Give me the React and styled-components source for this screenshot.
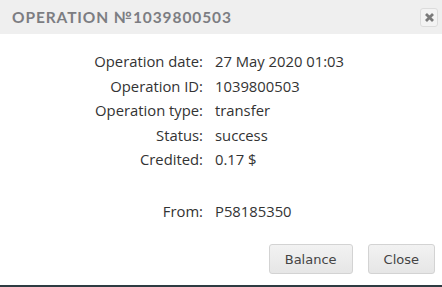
import React from "react"
import styled, { createGlobalStyle } from "styled-components"

const Global = createGlobalStyle`
  html, body {
    margin: 0;
    padding: 0;
    background: #2e3b42;
  }
`

const Dialog = styled.section`
  width: 442px;
  height: 285px;
  background: #fff;
  display: flex;
  flex-direction: column;
`

const Header = styled.header`
  height: 34px;
  background: #efefef;
  display: flex;
  align-items: center;
  justify-content: space-between;
  padding: 0 4px 0 12px;
`

const Title = styled.h2`
  margin: 0;
  font-family: "Lato", sans-serif;
  font-weight: 700;
  font-size: 15.5px;
  letter-spacing: 0.9px;
  color: #7c7d82;
`

const CloseX = styled.button`
  width: 18px;
  height: 19px;
  padding: 0;
  border: 1px solid #dcdcdc;
  border-radius: 3px;
  background: #f3f3f3;
  display: flex;
  align-items: center;
  justify-content: center;
`

const Details = styled.dl`
  margin: 18px 0 0;
  display: grid;
  grid-template-columns: 203px auto;
  column-gap: 12px;
  row-gap: 5px;
  font-family: "Open Sans", sans-serif;
  font-size: 14.8px;
  line-height: 19.6px;
  color: #333;
`

const Label = styled.dt`
  text-align: right;
  margin-top: ${p => p.$gap || 0}px;
`

const Value = styled.dd`
  margin: ${p => p.$gap || 0}px 0 0;
`

const Footer = styled.footer`
  margin-top: auto;
  display: flex;
  justify-content: flex-end;
  gap: 15px;
  padding: 0 7px 11px 0;
`

const Button = styled.button`
  height: 30px;
  padding: 0 15px;
  border: 1px solid #d3d3d3;
  border-radius: 3px;
  background: linear-gradient(#f2f2f2, #e6e6e6);
  font-family: "DejaVu Sans", sans-serif;
  font-size: 13px;
  color: #444;
`

const rows = [
  ["Operation date:", "27 May 2020 01:03"],
  ["Operation ID:", "1039800503"],
  ["Operation type:", "transfer"],
  ["Status:", "success"],
  ["Credited:", "0.17 $"],
  ["From:", "P58185350", 27],
]

const App = () => (
  <>
    <Global />
    <Dialog>
      <Header>
        <Title>OPERATION №1039800503</Title>
        <CloseX aria-label="close">
          <svg width="11" height="11" viewBox="0 0 11 11">
            <path d="M2 2 L9 9 M9 2 L2 9" stroke="#7a7a7a" strokeWidth="2.8" />
          </svg>
        </CloseX>
      </Header>
      <Details>
        {rows.map(([label, value, gap]) => (
          <React.Fragment key={label}>
            <Label $gap={gap}>{label}</Label>
            <Value $gap={gap}>{value}</Value>
          </React.Fragment>
        ))}
      </Details>
      <Footer>
        <Button>Balance</Button>
        <Button>Close</Button>
      </Footer>
    </Dialog>
  </>
)

export default App
